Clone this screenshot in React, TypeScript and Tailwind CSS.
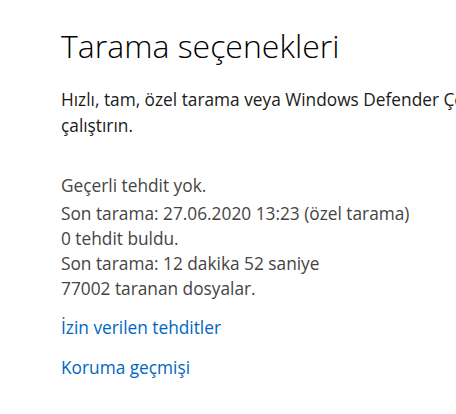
import React from "react";

const statusLines = [
  "Son tarama: 27.06.2020 13:23 (özel tarama)",
  "0 tehdit buldu.",
  "Son tarama: 12 dakika 52 saniye",
  "77002 taranan dosyalar.",
];

export default function App() {
  return (
    <div className="w-[456px] h-[414px] overflow-hidden bg-white font-['Open_Sans',sans-serif]">
      <main className="pl-[61px] pt-[26px] w-[700px]">
        <h1 className="text-[32px] leading-[40px] font-light text-black">
          Tarama seçenekleri
        </h1>
        <p className="mt-[21px] text-[17.3px] leading-[26px] text-[#1a1a1a] whitespace-nowrap">
          Hızlı, tam, özel tarama veya Windows Defender Çevrimdışı taramasını
          <br />
          çalıştırın.
        </p>
        <section className="mt-[34px] text-[17.3px] text-[#444]">
          <div className="leading-[26px]">Geçerli tehdit yok.</div>
          <div className="mt-[2px] flex flex-col leading-[25px]">
            {statusLines.map((line) => (
              <span key={line}>{line}</span>
            ))}
          </div>
        </section>
        <nav className="mt-[14px] flex flex-col gap-[14px] text-[17.3px] leading-[26px] text-[#0067c0]">
          <a href="#">İzin verilen tehditler</a>
          <a href="#">Koruma geçmişi</a>
        </nav>
      </main>
    </div>
  );
}
